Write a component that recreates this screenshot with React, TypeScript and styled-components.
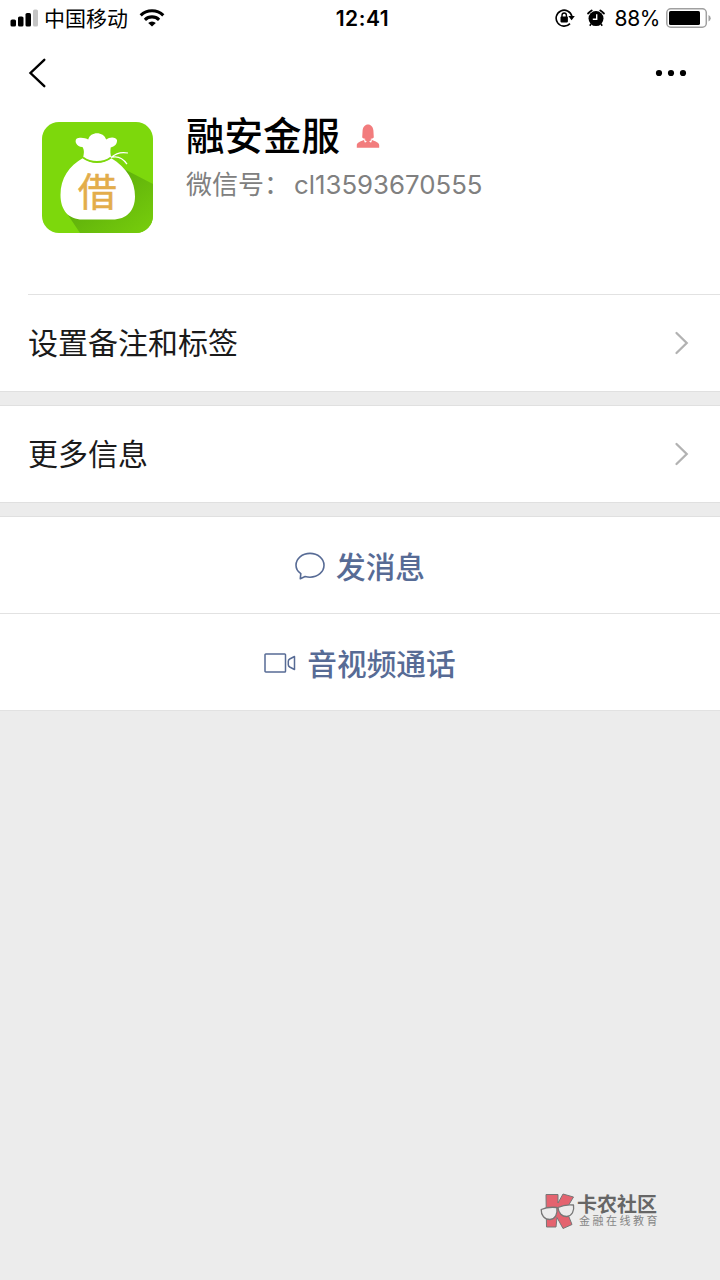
import React from "react";
import styled, { createGlobalStyle } from "styled-components";

const GlobalStyle = createGlobalStyle`
  * { box-sizing: border-box; }
  body {
    margin: 0;
    background: #ececec;
    font-family: Inter, "Noto Sans CJK SC", sans-serif;
    color: #1a1a1a;
  }
`;

const Page = styled.div`
  width: 720px;
  height: 1280px;
  display: flex;
  flex-direction: column;
  background: #ececec;
  overflow: hidden;
`;

const StatusBar = styled.header`
  height: 36px;
  flex: none;
  display: grid;
  grid-template-columns: 1fr auto 1fr;
  grid-template-rows: 36px;
  align-items: center;
  padding: 0 9px 0 10px;
  background: #fff;
  color: #000;
`;

const StatusGroup = styled.div<{ $end?: boolean }>`
  display: flex;
  align-items: center;
  justify-content: ${(p) => (p.$end ? "flex-end" : "flex-start")};
  svg { flex: none; display: block; }
`;

const Carrier = styled.span`
  font-size: 21px;
  line-height: 34px;
  padding-top: 2px;
  margin: 0 11px 0 6px;
`;

const Clock = styled.span`
  font-size: 21px;
  font-weight: 600;
  line-height: 34px;
  letter-spacing: 0.55px;
  padding: 2px 0 0 4px;
`;

const Indicators = styled.div`
  display: flex;
  align-items: center;
  gap: 12px;
`;

const Percent = styled.span`
  font-size: 21px;
  line-height: 34px;
  letter-spacing: -0.4px;
  padding-top: 2px;
  margin: 0 6px 0 10px;
`;

const NavBar = styled.nav`
  height: 74px;
  flex: none;
  display: flex;
  align-items: center;
  justify-content: space-between;
  padding: 0 33px 0 28px;
  background: #fff;
`;

const Profile = styled.section`
  height: 184px;
  flex: none;
  display: flex;
  align-items: flex-start;
  padding: 12px 0 0 42px;
  background: #fff;
`;

const ProfileText = styled.div`
  margin-left: 33px;
  display: flex;
  flex-direction: column;
`;

const NameLine = styled.div`
  display: flex;
  align-items: center;
  height: 40px;
  margin-top: -6px;
  gap: 16px;
`;

const Name = styled.h1`
  margin: 0;
  font-size: 38.5px;
  font-weight: 500;
  line-height: 40px;
  color: #000;
`;

const Account = styled.div`
  display: flex;
  align-items: center;
  height: 36px;
  margin-top: 11px;
  font-size: 26px;
  line-height: 36px;
  color: #808080;
`;

const AccountLabel = styled.span`
  width: 108px;
  white-space: nowrap;
`;

const AccountId = styled.span`
  font-size: 25.8px;
`;

const Divider = styled.div<{ $inset?: number }>`
  height: 1px;
  flex: none;
  background: linear-gradient(#e2e2e2, #e2e2e2) ${(p) => p.$inset ?? 0}px 0 no-repeat #fff;
`;

const Gap = styled.div`
  height: 15px;
  flex: none;
  background: #ececec;
  border-top: 1px solid #e0e0e0;
  border-bottom: 1px solid #e0e0e0;
`;

const Row = styled.div`
  height: 96px;
  flex: none;
  display: flex;
  align-items: center;
  justify-content: space-between;
  padding: 0 31px 0 28px;
  background: #fff;
  font-size: 30px;
  line-height: 40px;
`;

const RowLabel = styled.span`
  padding-top: 1px;
  line-height: 41px;
`;

const Action = styled.button`
  height: 96px;
  flex: none;
  display: flex;
  align-items: center;
  justify-content: center;
  gap: 11px;
  border: 0;
  padding: 1px 0 0 0;
  background: #fff;
  color: #576b95;
  font: 500 29.7px/40px "Noto Sans CJK SC", sans-serif;
`;

const Watermark = styled.footer`
  margin: auto 62px 51px auto;
  display: flex;
  align-items: center;
  gap: 2px;
`;

const Brand = styled.div`
  display: flex;
  flex-direction: column;
  color: #666;
  font: 700 20px/20px "Noto Sans CJK SC", sans-serif;
`;

const Slogan = styled.span`
  font-size: 11px;
  font-weight: 400;
  line-height: 13px;
  letter-spacing: 2.5px;
  margin: 0 -2px 1px 2px;
  color: #858585;
`;

const Signal = () => (
  <svg width="28" height="18" viewBox="0 0 28 18">
    <rect x="0.5" y="10.5" width="5.5" height="7" rx="1.6" />
    <rect x="8" y="7.5" width="5.5" height="10" rx="1.6" />
    <rect x="15.5" y="4" width="5.5" height="13.5" rx="1.6" />
    <rect x="23" y="0.5" width="5" height="17" rx="1.6" fill="#c4c4c4" />
  </svg>
);

const Wifi = () => (
  <svg width="26" height="18" viewBox="0 0 26 18" fill="none" stroke="#000" strokeWidth="3.1">
    <path d="M1.7 6.4a16.2 16.2 0 0 1 22.6 0" />
    <path d="M5.9 10.8a10.2 10.2 0 0 1 14.2 0" />
    <path d="M13 17.5L9.2 13.9a5.5 5.5 0 0 1 7.6 0z" fill="#000" stroke="none" />
  </svg>
);

const RotationLock = () => (
  <svg width="20" height="20" viewBox="0 0 20 20">
    <path d="M15 15.6A8 8 0 1 1 16.9 8.2" fill="none" stroke="#000" strokeWidth="1.6" />
    <path d="M13.4 8h6.4l-3.2 4.3z" />
    <rect x="5.5" y="8.6" width="7.4" height="5.8" rx="0.8" />
    <path d="M7 9V7.2a2.2 2.2 0 0 1 4.4 0v2" fill="none" stroke="#000" strokeWidth="1.4" />
  </svg>
);

const Alarm = () => (
  <svg width="18" height="18" viewBox="0 0 18 18">
    <circle cx="9" cy="9.6" r="7.5" />
    <path d="M1.2 4.4A12 12 0 0 1 4.6 1.500M16.8 4.4a12 12 0 0 0-3.4-2.900" stroke="#000" strokeWidth="2" strokeLinecap="round" />
    <path d="M9.7 5.2v5H5.8" fill="none" stroke="#fff" strokeWidth="1.4" />
    <path d="M4 15l-1.2 1.7M14 15l1.2 1.7" stroke="#000" strokeWidth="1.6" />
  </svg>
);

const Battery = () => (
  <svg width="45" height="20" viewBox="0 0 45 20">
    <rect x="0.8" y="0.8" width="39.5" height="18.4" rx="4" fill="none" stroke="#a0a0a0" strokeWidth="1.5" />
    <rect x="3" y="3" width="31" height="14" rx="1.6" />
    <path d="M42.5 7v6.4q2.2-1 2.2-3.2T42.5 7z" fill="#a0a0a0" />
  </svg>
);

const Back = () => (
  <svg width="18" height="30" viewBox="0 0 18 30" fill="none" stroke="#000" strokeWidth="2.4" strokeLinecap="round">
    <path d="M16.3 1.8L2.5 15l13.8 13.2" />
  </svg>
);

const More = () => (
  <svg width="32" height="8" viewBox="0 0 32 8">
    <circle cx="4" cy="4" r="3.1" />
    <circle cx="16" cy="4" r="3.1" />
    <circle cx="28" cy="4" r="3.1" />
  </svg>
);

const Chevron = () => (
  <svg width="15" height="24" viewBox="0 0 15 24" fill="none" stroke="#b2b2b2" strokeWidth="2.3" strokeLinecap="round">
    <path d="M2.5 2L12.7 12 2.5 22" />
  </svg>
);

const Avatar = () => (
  <svg width="111" height="111" viewBox="0 0 111 111">
    <defs>
      <clipPath id="tile"><rect width="111" height="111" rx="17" /></clipPath>
      <linearGradient id="shade" x1="0.1" y1="0.2" x2="0.9" y2="1">
        <stop offset="0" stopColor="#58a80b" />
        <stop offset="1" stopColor="#76cc0c" />
      </linearGradient>
    </defs>
    <g clipPath="url(#tile)">
      <rect width="111" height="111" fill="#7dd80c" />
      <path d="M80 46L111 62v49H38L26 93l60-8z" fill="url(#shade)" />
      <path d="M41 36C27 44 18.5 56 18.5 73c0 15 8 24.5 22 24.5h30c14 0 22.5-9 22.5-23 0-15-8-29-24-38.5-8 6-20 6-28 0z" fill="#fff" />
      <path d="M41 36c1.500-6 1-8.500-.5-11-5.500.3-8.500-5.500-6-8.200 3-2 9-1 11.700.7 2-8.500 15.500-8.500 18 0 3.500-3 10-2.700 10.800.7.300 3.800-2.500 6.300-6.300 7.300-.5 4-.5 6.500.8 10.500-8 5.500-20.500 5.500-28.500 0z" fill="#fff" />
      <path d="M41 35.5c8 6 20 6 28 0" fill="none" stroke="#7dd80c" strokeWidth="1.9" />
      <path d="M69 35.500q7-6.500 17-4.500M70 35.200q9-2 15 7" fill="none" stroke="#fff" strokeWidth="1.2" />
      <text x="55.3" y="84" textAnchor="middle" fontFamily="Noto Sans CJK SC, sans-serif" fontSize="39" fontWeight="400" fill="#e3ad4b" stroke="#e3ad4b" strokeWidth="0.5" strokeLinejoin="round">借</text>
    </g>
  </svg>
);

const Person = () => (
  <svg width="24" height="25" viewBox="0 0 24 25" fill="#f27c7d">
    <path d="M6.2 13.5L6.600 6.500C7 3 9 .6 12 .6s5 2.400 5.400 5.900l.4 7q-1.300 1.200-3 1.300v3.500H9.200v-3.500q-1.700-.1-3-1.300z" />
    <path d="M.8 23.8v-2.6c0-2.600 3.600-3.600 7.400-5.400h7.600c3.800 1.800 7.400 2.800 7.400 5.400v2.600z" />
    <path d="M7.600 15.800l1.400 3 1.900-1.500zM16.400 15.800l-1.400 3-1.900-1.500z" fill="#fff" />
  </svg>
);

const Bubble = () => (
  <svg width="30" height="28" viewBox="0.5 0 30 28" fill="none" stroke="#576b95" strokeWidth="1.6" strokeLinejoin="round">
    <path d="M6.3 21.700C3.100 19.500 1.500 16.600 1.500 13.300 1.500 6.700 7.600 1.400 15.500 1.400s14 5.300 14 11.900-6.100 11.900-14 11.900c-1.700 0-3.400-.3-4.900-.7L5.800 26.700z" />
  </svg>
);

const Camera = () => (
  <svg width="32" height="20" viewBox="0 0 32 20" fill="none" stroke="#576b95" strokeWidth="1.5" strokeLinejoin="round">
    <rect x="1" y="1" width="20.5" height="18" rx="0.8" />
    <path d="M30.500 3.500v13l-4.800-2.500q-1.400-.8-1.400-2.200V8.200q0-1.400 1.400-2.200z" />
  </svg>
);

const BrandMark = () => (
  <svg width="35" height="36" viewBox="0 0 35 36" strokeLinejoin="round">
    <path d="M6 1.500h12v8.500l5-9 10.500 3-7.500 12.500 6 15-9 4-6-11-1 9.500H6.500z" fill="#e4636f" stroke="#777" strokeWidth="1" />
    <path d="M1.200 16.500q7-3 15.600-2c1 7-1.500 11.500-6.800 12-5.500 0-9-4-8.800-10zM18 14.500q7-3.500 15.500-2.500c1 6-1.500 11-6.500 11.500-5 .3-8.500-3.500-9-9z" fill="#ececec" stroke="#777" strokeWidth="1.3" />
  </svg>
);

export default function App() {
  return (
    <>
      <GlobalStyle />
      <Page>
        <StatusBar>
          <StatusGroup>
            <Signal />
            <Carrier>中国移动</Carrier>
            <Wifi />
          </StatusGroup>
          <Clock>12:41</Clock>
          <StatusGroup $end>
            <Indicators>
              <RotationLock />
              <Alarm />
            </Indicators>
            <Percent>88%</Percent>
            <Battery />
          </StatusGroup>
        </StatusBar>
        <NavBar>
          <Back />
          <More />
        </NavBar>
        <Profile>
          <Avatar />
          <ProfileText>
            <NameLine>
              <Name>融安金服</Name>
              <Person />
            </NameLine>
            <Account>
              <AccountLabel>微信号：</AccountLabel>
              <AccountId>cl13593670555</AccountId>
            </Account>
          </ProfileText>
        </Profile>
        <Divider $inset={28} />
        <Row><RowLabel>设置备注和标签</RowLabel><Chevron /></Row>
        <Gap />
        <Row><RowLabel>更多信息</RowLabel><Chevron /></Row>
        <Gap />
        <Action><Bubble />发消息</Action>
        <Divider />
        <Action><Camera />音视频通话</Action>
        <Divider />
        <Watermark>
          <BrandMark />
          <Brand>
            卡农社区
            <Slogan>金融在线教育</Slogan>
          </Brand>
        </Watermark>
      </Page>
    </>
  );
}
